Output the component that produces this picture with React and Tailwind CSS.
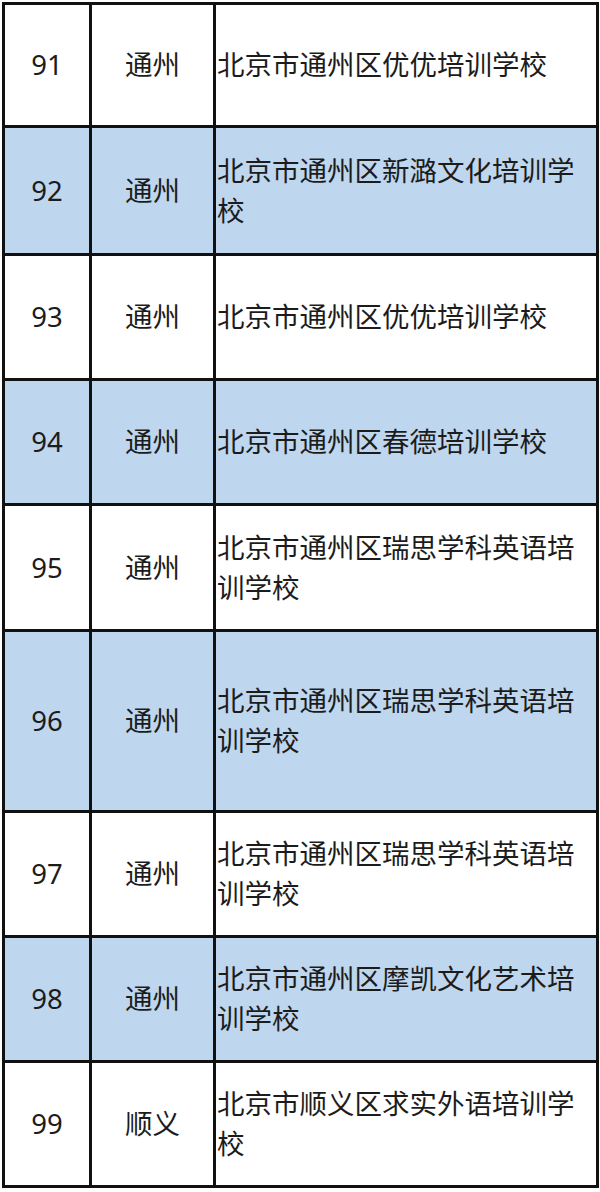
const rows = [
  { n: "91", d: "通州", s: "北京市通州区优优培训学校", h: "h-[123px]", bg: "bg-white" },
  { n: "92", d: "通州", s: "北京市通州区新潞文化培训学校", h: "h-[128px]", bg: "bg-[#bed6ee]" },
  { n: "93", d: "通州", s: "北京市通州区优优培训学校", h: "h-[125px]", bg: "bg-white" },
  { n: "94", d: "通州", s: "北京市通州区春德培训学校", h: "h-[125px]", bg: "bg-[#bed6ee]" },
  { n: "95", d: "通州", s: "北京市通州区瑞思学科英语培训学校", h: "h-[126px]", bg: "bg-white" },
  { n: "96", d: "通州", s: "北京市通州区瑞思学科英语培训学校", h: "h-[181px]", bg: "bg-[#bed6ee]" },
  { n: "97", d: "通州", s: "北京市通州区瑞思学科英语培训学校", h: "h-[125px]", bg: "bg-white" },
  { n: "98", d: "通州", s: "北京市通州区摩凯文化艺术培训学校", h: "h-[125px]", bg: "bg-[#bed6ee]" },
  { n: "99", d: "顺义", s: "北京市顺义区求实外语培训学校", h: "h-[122px]", bg: "bg-white" },
];

export default function App() {
  return (
    <div className="w-[600px] h-[1192px] bg-white pt-[2px] pl-[2px]">
      <div
        className="w-[597px] border-[3px] border-[#111] text-[#1c1c1c] text-[27.5px] leading-[40px]"
        style={{ fontFamily: '"Noto Sans", "Noto Sans CJK SC", sans-serif' }}
      >
        {rows.map((r, i) => (
          <div
            key={r.n}
            className={`flex ${r.h} ${r.bg} ${i < rows.length - 1 ? "border-b-[3px] border-[#111]" : ""}`}
          >
            <div className="w-[87px] shrink-0 border-r-[3px] border-[#111] flex items-center justify-center">
              {r.n}
            </div>
            <div className="w-[124px] shrink-0 border-r-[3px] border-[#111] flex items-center justify-center">
              {r.d}
            </div>
            <div className="flex-1 flex items-center pl-[1px] pr-0">
              <div className="break-all">{r.s}</div>
            </div>
          </div>
        ))}
      </div>
    </div>
  );
}
